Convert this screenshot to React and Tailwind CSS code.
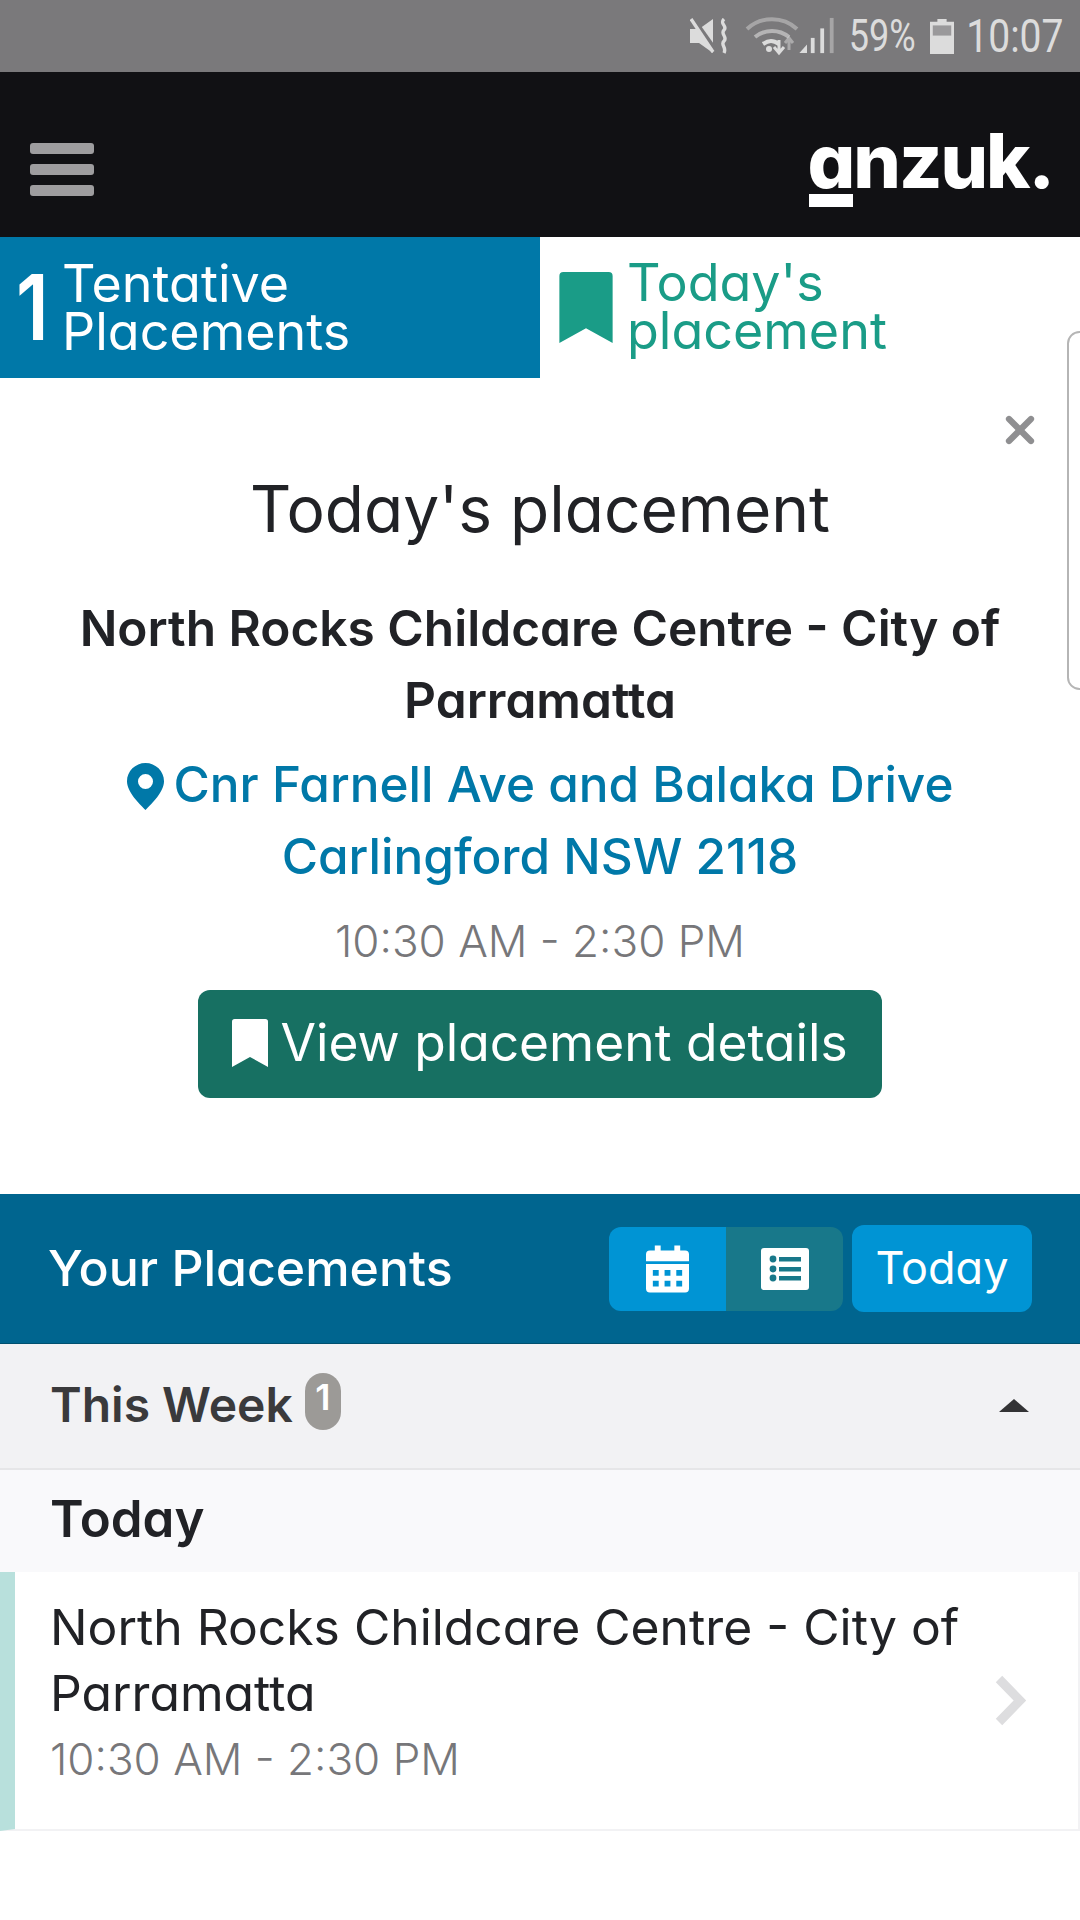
import { X } from 'lucide-react';

function Bookmark({ className }) {
  return (
    <svg viewBox="0 0 54 72" className={className} fill="currentColor">
      <path d="M4 0h46a4 4 0 0 1 4 4v68L27 57 0 72V4a4 4 0 0 1 4-4z" />
    </svg>
  );
}

function StatusBar() {
  return (
    <div className="flex h-[72px] items-center justify-end bg-[#7a797b] pr-[16px] text-[#dcdcdc]">
      <svg viewBox="0 0 38 36" className="mr-[17px] h-[36px] w-[38px]" fill="currentColor">
        <path d="M0 11h9L23 1v34L9 25H0z" />
        <path d="M3 0l24 34" stroke="#7a797b" strokeWidth="4" />
        <path d="M1 1l22 33" stroke="currentColor" strokeWidth="3.4" />
        <path d="M34 1c-5 5 4 7 0 11s4 7 0 11 3 6 0 12" fill="none" stroke="currentColor" strokeWidth="3.4" />
      </svg>
      <svg viewBox="0 0 65 40" className="mr-[-12px] h-[40px] w-[65px]" fill="none" stroke="currentColor">
        <path d="M2 13c14-13 36-13 50 0" strokeWidth="4" opacity=".45" />
        <path d="M10 21c10-8 24-8 34 0" strokeWidth="4" opacity=".6" />
        <path d="M18 28c6-4 10-4 16 0" strokeWidth="4" />
        <circle cx="24" cy="33" r="3" fill="currentColor" stroke="none" />
        <path d="M34 24v12m-5-5 5 6 5-6" strokeWidth="3" />
        <path d="M44 34V22m-4 5 4-5 4 5" strokeWidth="3" opacity=".5" />
      </svg>
      <svg viewBox="0 0 38 40" className="mr-[14px] h-[38px] w-[37px]" fill="currentColor">
        <path d="M1 38l8-9v9z" />
        <rect x="13" y="22" width="4" height="16" />
        <rect x="23" y="12" width="4" height="26" />
        <rect x="33" y="1" width="4" height="37" opacity=".45" />
      </svg>
      <span className="ml-[-15px] mr-[15px] origin-right scale-x-[0.82] font-['Roboto'] text-[44px] leading-none">59%</span>
      <svg viewBox="0 0 26 38" className="mr-[12px] h-[37px] w-[24px]">
        <path d="M8 0h10v3h8v35H0V3h8z" fill="currentColor" />
        <rect x="3" y="7" width="20" height="11" fill="#9a999b" />
      </svg>
      <span className="ml-[-17px] origin-right scale-x-[0.85] whitespace-nowrap font-['Roboto'] text-[46px] leading-none">10:07</span>
    </div>
  );
}

function Header() {
  return (
    <div className="flex h-[165px] items-center justify-between bg-[#111114] pl-[30px] pr-[27px]">
      <div className="mt-[30px] flex flex-col gap-[10px]">
        <div className="h-[11px] w-[64px] rounded-[3px] bg-[#9e9d9f]" />
        <div className="h-[11px] w-[64px] rounded-[3px] bg-[#9e9d9f]" />
        <div className="h-[11px] w-[64px] rounded-[3px] bg-[#9e9d9f]" />
      </div>
      <div className="relative mt-[12px] text-[75px] font-extrabold leading-none tracking-[-2px] text-white">
        anzuk.
        <div className="absolute bottom-[-9px] left-[2px] h-[13px] w-[44px] bg-white" />
      </div>
    </div>
  );
}

function Tabs() {
  return (
    <div className="flex h-[141px]">
      <div className="flex w-[540px] items-center bg-[#0078a8] pl-[16px] text-white">
        <span className="w-[46px] origin-left scale-x-[0.85] text-[91px] font-semibold leading-none">1</span>
        <div className="text-[52px] leading-[48px]">Tentative<br />Placements</div>
      </div>
      <div className="flex flex-1 items-center pl-[19px] text-[#1a9c87]">
        <Bookmark className="mr-[14px] h-[71px] w-[54px]" />
        <div className="mb-[2px] text-[52px] leading-[48px]">Today's<br />placement</div>
      </div>
    </div>
  );
}

function TodayPanel() {
  return (
    <div className="relative h-[816px] text-center">
      <X className="absolute right-[38px] top-[30px] h-[44px] w-[44px] text-[#8f8f91]" strokeWidth={3.4} />
      <div className="absolute right-[-12px] top-[-47px] h-[359px] w-[25px] rounded-[14px] border-2 border-[#b5b5b5]" />
      <h1 className="pt-[96px] text-[64px] leading-[70px] text-[#212226]">Today's placement</h1>
      <div className="mt-[48px] text-[49.6px] font-semibold leading-[72px] text-[#212226]">
        North Rocks Childcare Centre - City of<br />Parramatta
      </div>
      <div className="mt-[12px] text-[49.5px] font-medium leading-[72px] text-[#0078a8]">
        <svg viewBox="0 0 37 47" className="mr-[10px] inline h-[47px] w-[37px] align-[-8px]">
          <path fillRule="evenodd" fill="#0078a8" d="M18.5 0C8.3 0 0 8.2 0 18.3 0 29 12 40.500 18.500 47 25 40.500 37 29 37 18.300 37 8.200 28.700 0 18.500 0zm0 11a7.500 7.500 0 1 1 0 15 7.500 7.500 0 0 1 0-15z" />
        </svg>
        Cnr Farnell Ave and Balaka Drive<br />Carlingford NSW 2118
      </div>
      <div className="mt-[19px] text-[44px] font-light leading-[60px] text-[#77777a]">10:30 AM - 2:30 PM</div>
      <button className="mx-auto mt-[19px] flex h-[108px] w-[684px] items-center justify-center rounded-[12px] bg-[#177062] pb-[2px] text-[51.5px] text-white">
        <Bookmark className="mr-[12px] h-[48px] w-[36px]" />
        View placement details
      </button>
    </div>
  );
}

function PlacementsBar() {
  return (
    <div className="flex h-[150px] items-center justify-between border-b border-[#00506f] bg-[#00658f] pl-[48px] pr-[48px]">
      <div className="text-[50px] font-medium text-white">Your Placements</div>
      <div className="flex items-center gap-[9px]">
        <div className="flex h-[84px] w-[234px] overflow-hidden rounded-[12px]">
          <div className="flex w-[117px] items-center justify-center bg-[#0094d4]">
            <svg viewBox="0 0 44 48" className="h-[48px] w-[43px]" fill="#fff">
              <path fillRule="evenodd" d="M9 0h6v5h14V0h6v5h5a4 4 0 0 1 4 4v7H0V9a4 4 0 0 1 4-4h5zM0 19h44v25a4 4 0 0 1-4 4H4a4 4 0 0 1-4-4zm7 6v6h6v-6zm12 0v6h6v-6zm12 0v6h6v-6zM7 36v6h6v-6zm12 0v6h6v-6zm12 0v6h6v-6z" />
            </svg>
          </div>
          <div className="flex w-[117px] items-center justify-center bg-[#18788a]">
            <svg viewBox="0 0 48 42" className="h-[42px] w-[48px]">
              <rect width="48" height="42" rx="3" fill="#fff" />
              <g fill="#18788a">
                <circle cx="12" cy="11" r="3.4" /><circle cx="12" cy="21" r="3.4" /><circle cx="12" cy="30" r="3.4" />
                <rect x="18" y="9" width="22" height="4.5" /><rect x="18" y="19" width="22" height="4.5" /><rect x="18" y="28" width="22" height="4.5" />
              </g>
            </svg>
          </div>
        </div>
        <div className="flex h-[87px] w-[180px] items-center justify-center rounded-[12px] bg-[#0094d4] pb-[2px] text-[45px] text-white">Today</div>
      </div>
    </div>
  );
}

function WeekList() {
  return (
    <div>
      <div className="flex h-[126px] items-center justify-between border-b-2 border-[#e6e6e8] bg-[#f2f2f4] pb-[2px] pl-[50px] pr-[51px]">
        <div className="flex items-center">
          <span className="text-[48px] font-semibold text-[#3a3a3c]">This Week</span>
          <span className="mb-[8px] ml-[12px] flex h-[57px] w-[36px] items-center justify-center rounded-[18px] bg-[#9c9a97] pb-[8px] text-[36px] font-semibold leading-none text-white">1</span>
        </div>
        <div className="h-0 w-0 border-x-[15px] border-b-[13px] border-x-transparent border-b-[#333335]" />
      </div>
      <div className="flex h-[102px] items-center bg-[#f9f9fb] pb-[3px] pl-[50px] text-[51px] font-semibold text-[#212226]">Today</div>
      <div className="flex h-[259px] items-center justify-between border-b-2 border-r-2 border-[#f2f2f4] border-l-[15px] border-l-[#b8e0dc] pl-[35px] pr-[52px]">
        <div className="mt-[-16px]">
          <div className="text-[49.8px] leading-[66px] text-[#212226]">North Rocks Childcare Centre - City of<br />Parramatta</div>
          <div className="text-[44px] font-light leading-[66px] text-[#77777a]">10:30 AM - 2:30 PM</div>
        </div>
        <svg viewBox="0 0 31 51" className="h-[51px] w-[31px]" fill="none" stroke="#dddddf" strokeWidth="9">
          <path d="M4 4l21 21.500L4 47" />
        </svg>
      </div>
    </div>
  );
}

export default function App() {
  return (
    <div className="min-h-[1920px] w-[1080px] overflow-hidden bg-white font-['Inter',sans-serif] [font-feature-settings:'cv11']">
      <StatusBar />
      <Header />
      <Tabs />
      <TodayPanel />
      <PlacementsBar />
      <WeekList />
    </div>
  );
}
